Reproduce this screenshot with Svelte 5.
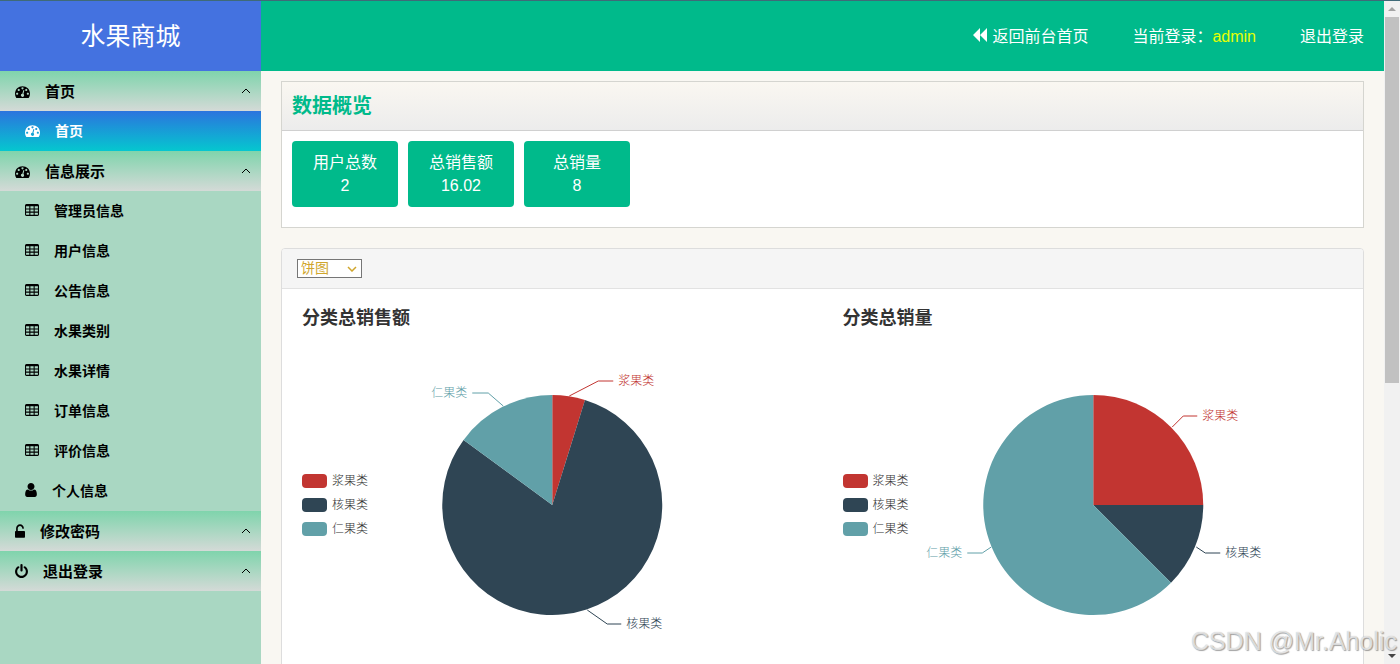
<script lang="ts">
  type IconName = 'dashboard' | 'table' | 'user' | 'unlock' | 'power';
  type MenuItem = { label: string; icon: IconName; active?: boolean };
  type MenuGroup = { label: string; icon: IconName; open: boolean; items: MenuItem[] };
  type Slice = { name: string; value: number; color: string; line: string; x: number; y: number; left?: boolean };

  const RED = '#c23531';
  const NAVY = '#2f4554';
  const TEAL = '#61a0a8';

  const cells = [192, 704, 1216]
    .flatMap((x) => [384, 768, 1152].map((y) => `M${x} ${y}h384v256h-384z`))
    .join('');

  const icons: Record<IconName, { width: number; box: string; d: string }> = {
    dashboard: {
      width: 15,
      box: '0 128 1792 1408',
      d: 'M384 1152q0-53-37.5-90.5t-90.5-37.5-90.5 37.5-37.5 90.5 37.5 90.5 90.5 37.5 90.5-37.5 37.5-90.5zm192-448q0-53-37.5-90.5t-90.5-37.5-90.5 37.5-37.5 90.5 37.5 90.5 90.5 37.5 90.5-37.5 37.5-90.5zm428 481l101-382q6-26-7.5-48.5t-38.5-29.5-48 6.5-30 39.5l-101 382q-60 5-107 43.5t-63 98.5q-20 77 20 146t117 89 146-20 89-117q16-60-6-117t-72-91zm660-33q0-53-37.5-90.5t-90.5-37.5-90.5 37.5-37.5 90.5 37.5 90.5 90.5 37.5 90.5-37.5 37.5-90.5zm-640-640q0-53-37.5-90.5t-90.5-37.5-90.5 37.5-37.5 90.5 37.5 90.5 90.5 37.5 90.5-37.5 37.5-90.5zm448 192q0-53-37.5-90.5t-90.5-37.5-90.5 37.5-37.5 90.5 37.5 90.5 90.5 37.5 90.5-37.5 37.5-90.5zm320 448q0 261-141 483-19 29-54 29h-1402q-35 0-54-29-141-221-141-483 0-182 71-348t191-286 286-191 348-71 348 71 286 191 191 286 71 348z',
    },
    table: {
      width: 14,
      box: '64 128 1664 1408',
      d: `M1728 288v1088q0 66-47 113t-113 47H224q-66 0-113-47t-47-113V288q0-66 47-113t113-47h1344q66 0 113 47t47 113z${cells}`,
    },
    user: {
      width: 12,
      box: '256 128 1280 1536',
      d: 'M1536 1399q0 109-62.5 187t-150.5 78H469q-88 0-150.5-78T256 1399q0-85 8.5-160.5t31.5-152 58.5-131 94-89T583 832q131 128 313 128t313-128q76 0 134.5 34.5t94 89 58.5 131 31.5 152 8.5 160.5zm-256-887q0 159-112.5 271.5T896 896 624.5 783.5 512 512t112.5-271.5T896 128t271.5 112.5T1280 512z',
    },
    unlock: {
      width: 10,
      box: '320 128 1152 1536',
      d: 'M1376 896q40 0 68 28t28 68v576q0 40-28 68t-68 28H416q-40 0-68-28t-28-68V992q0-40 28-68t68-28h32V576q0-185 131.5-316.5T896 128t316.5 131.5T1344 576q0 26-19 45t-45 19h-64q-26 0-45-19t-19-45q0-106-75-181t-181-75-181 75-75 181v320h736z',
    },
    power: {
      width: 13,
      box: '128 0 1536 1664',
      d: 'M1664 896q0 156-61 298t-164 245-245 164-298 61-298-61-245-164-164-245-61-298q0-182 80.5-343T435 283q43-32 95.5-25t83.5 50q32 42 24.5 94.5T589 486q-98 74-151.5 181T384 896q0 104 40.5 198.5T534 1258t163.5 109.5T896 1408t198.5-40.5T1258 1258t109.5-163.5T1408 896q0-122-53.5-229T1203 486q-42-31-49.5-83.5T1178 308q31-43 84-50t95 25q146 109 226.5 270t80.5 343zm-640-768v640q0 52-38 90t-90 38-90-38-38-90V128q0-52 38-90t90-38 90 38 38 90z',
    },
  };

  let groups: MenuGroup[] = [
    { label: '首页', icon: 'dashboard', open: true, items: [{ label: '首页', icon: 'dashboard', active: true }] },
    {
      label: '信息展示',
      icon: 'dashboard',
      open: true,
      items: [
        { label: '管理员信息', icon: 'table' },
        { label: '用户信息', icon: 'table' },
        { label: '公告信息', icon: 'table' },
        { label: '水果类别', icon: 'table' },
        { label: '水果详情', icon: 'table' },
        { label: '订单信息', icon: 'table' },
        { label: '评价信息', icon: 'table' },
        { label: '个人信息', icon: 'user' },
      ],
    },
    { label: '修改密码', icon: 'unlock', open: true, items: [] },
    { label: '退出登录', icon: 'power', open: true, items: [] },
  ];

  const stats = [
    { label: '用户总数', value: '2' },
    { label: '总销售额', value: '16.02' },
    { label: '总销量', value: '8' },
  ];

  const charts: { title: string; slices: Slice[] }[] = [
    {
      title: '分类总销售额',
      slices: [
        { name: '浆果类', value: 0.77, color: RED, line: '267,55 296,40 311,40', x: 316, y: 40 },
        { name: '核果类', value: 12.86, color: NAVY, line: '285,269 305,283 319,283', x: 324, y: 283 },
        { name: '仁果类', value: 2.39, color: TEAL, line: '201,65 186,52 170,52', x: 165, y: 52, left: true },
      ],
    },
    {
      title: '分类总销量',
      slices: [
        { name: '浆果类', value: 2, color: RED, line: '329,86 340,75 354,75', x: 359, y: 75 },
        { name: '核果类', value: 1, color: NAVY, line: '353,206 362,212 377,212', x: 382, y: 212 },
        { name: '仁果类', value: 5, color: TEAL, line: '148,206 139,212 124,212', x: 119, y: 212, left: true },
      ],
    },
  ];

  let chartType = 'pie';

  const CX = 250;
  const CY = 164;
  const R = 110;

  function point(turn: number) {
    const a = turn * Math.PI * 2;
    return `${(CX + R * Math.sin(a)).toFixed(2)} ${(CY - R * Math.cos(a)).toFixed(2)}`;
  }

  function slicePath(slices: Slice[], index: number) {
    const total = slices.reduce((sum, s) => sum + s.value, 0);
    const start = slices.slice(0, index).reduce((sum, s) => sum + s.value, 0) / total;
    const share = slices[index].value / total;
    return `M${CX} ${CY}L${point(start)}A${R} ${R} 0 ${share > 0.5 ? 1 : 0} 1 ${point(start + share)}Z`;
  }

  function toggle(index: number) {
    groups[index].open = !groups[index].open;
  }
</script>

{#snippet icon(name: IconName)}
  <svg class="icon" width={icons[name].width} height="14" viewBox={icons[name].box} aria-hidden="true">
    <path fill="currentColor" fill-rule="evenodd" d={icons[name].d} />
  </svg>
{/snippet}

<div class="window">
  <aside class="sidebar">
    <div class="logo">水果商城</div>
    <nav>
      {#each groups as group, i}
        <button class="group" type="button" aria-expanded={group.open} on:click={() => toggle(i)}>
          {@render icon(group.icon)}
          <span>{group.label}</span>
          <svg class="chevron" class:closed={!group.open} width="10" height="6" viewBox="0 0 10 6" aria-hidden="true">
            <path d="M1 5l4-4 4 4" fill="none" stroke="currentColor" />
          </svg>
        </button>
        {#if group.open}
          {#each group.items as item}
            <a class="item" class:active={item.active} href="#{item.label}">
              {@render icon(item.icon)}
              <span>{item.label}</span>
            </a>
          {/each}
        {/if}
      {/each}
    </nav>
  </aside>

  <div class="page">
    <header class="topbar">
      <a href="#front">
        <svg width="15" height="14" viewBox="0 0 15 14" aria-hidden="true">
          <path d="M7 0v14L0 7zM14 0v14L7 7z" fill="currentColor" />
        </svg>
        返回前台首页
      </a>
      <span>当前登录：<b>admin</b></span>
      <a href="#logout">退出登录</a>
    </header>

    <main>
      <section class="overview">
        <h1>数据概览</h1>
        <div class="stats">
          {#each stats as stat}
            <div class="stat">
              <div>{stat.label}</div>
              <div>{stat.value}</div>
            </div>
          {/each}
        </div>
      </section>

      <section class="panel">
        <div class="panel-heading">
          <div class="select">
            <select bind:value={chartType} aria-label="图表类型">
              <option value="pie">饼图</option>
              <option value="bar">柱状图</option>
            </select>
            <svg width="10" height="6" viewBox="0 0 10 6" aria-hidden="true">
              <path d="M1 1l4 4 4-4" fill="none" stroke="currentColor" stroke-width="1.5" />
            </svg>
          </div>
        </div>
        <div class="charts">
          {#each charts as chart}
            <div class="chart">
              <h2>{chart.title}</h2>
              <div class="canvas">
                <svg class="pie" viewBox="0 0 500 328" role="img" aria-label={chart.title}>
                  {#each chart.slices as slice, i}
                    <path d={slicePath(chart.slices, i)} fill={slice.color} />
                    <polyline points={slice.line} fill="none" stroke={slice.color} />
                    <text
                      x={slice.x}
                      y={slice.y}
                      fill={slice.color}
                      text-anchor={slice.left ? 'end' : 'start'}
                      dominant-baseline="central">{slice.name}</text
                    >
                  {/each}
                </svg>
                <ul class="legend">
                  {#each chart.slices as slice}
                    <li><i style="background: {slice.color}"></i>{slice.name}</li>
                  {/each}
                </ul>
              </div>
            </div>
          {/each}
        </div>
      </section>
    </main>
  </div>

  <div class="scrollbar" aria-hidden="true">
    <svg width="8" height="4" viewBox="0 0 8 4"><path d="M0 4l4-4 4 4z" fill="#a3a3a3" /></svg>
    <div class="track"><div class="thumb"></div></div>
    <svg width="8" height="4" viewBox="0 0 8 4"><path d="M0 0l4 4 4-4z" fill="#444" /></svg>
  </div>

  <div class="watermark">CSDN @Mr.Aholic</div>
</div>

<style>
  :global(body) {
    margin: 0;
  }

  .window {
    position: relative;
    display: flex;
    height: 100vh;
    box-sizing: border-box;
    border-top: 1px solid #3f6a78;
    overflow: hidden;
    background: #f9f7f2;
    color: #333;
    font-family: 'Liberation Sans', 'Noto Sans CJK SC', sans-serif;
    font-size: 16px;
  }

  a {
    color: inherit;
    text-decoration: none;
  }

  .sidebar {
    width: 261px;
    flex-shrink: 0;
    overflow: hidden;
    background: #a9d7c2;
    color: #000;
  }

  .logo {
    height: 70px;
    line-height: 70px;
    background: #4472e0;
    color: #fff;
    font-size: 25px;
    text-align: center;
  }

  .group,
  .item {
    display: flex;
    align-items: center;
    gap: 15px;
    width: 100%;
    height: 40px;
    box-sizing: border-box;
    font-weight: bold;
  }

  .group {
    padding: 0 10px 1px 15px;
    border: none;
    background: linear-gradient(#7fd4ac, #d4dad7);
    color: inherit;
    font-family: inherit;
    font-size: 15px;
    cursor: pointer;
  }

  .item {
    padding: 0 25px 2px;
    font-size: 14px;
  }

  .item.active {
    background: linear-gradient(#2b74de, #05c7cf);
    color: #fff;
  }

  .icon {
    flex-shrink: 0;
  }

  .chevron {
    margin-left: auto;
  }

  .chevron.closed {
    transform: rotate(180deg);
  }

  .page {
    flex: 1;
    min-width: 0;
    overflow-y: auto;
    scrollbar-width: none;
  }

  .topbar {
    display: flex;
    align-items: center;
    justify-content: flex-end;
    gap: 44px;
    height: 70px;
    box-sizing: border-box;
    padding: 0 20px 3px;
    background: #00ba8b;
    color: #fff;
  }

  .topbar a {
    display: flex;
    align-items: center;
    gap: 4px;
  }

  .topbar b {
    color: #e6ff00;
    font-weight: normal;
  }

  main {
    padding: 10px 20px;
  }

  .overview {
    margin-bottom: 20px;
    border: 1px solid #d5d5d0;
    background: #fff;
  }

  h1 {
    margin: 0;
    padding: 0 10px;
    border-bottom: 1px solid #d0d0d0;
    background: linear-gradient(#faf7f1, #ececec);
    color: #00ba8b;
    font-size: 20px;
    line-height: 48px;
  }

  .stats {
    display: flex;
    flex-wrap: wrap;
    gap: 10px;
    padding: 10px 10px 20px;
  }

  .stat {
    width: 106px;
    box-sizing: border-box;
    padding: 10px 0;
    border-radius: 4px;
    background: #00ba8b;
    color: #fff;
    line-height: 23px;
    text-align: center;
  }

  .panel {
    border: 1px solid #ddd;
    border-radius: 4px;
    background: #fff;
    overflow: hidden;
  }

  .panel-heading {
    display: flex;
    align-items: center;
    height: 40px;
    box-sizing: border-box;
    padding: 0 15px;
    border-bottom: 1px solid #e2e2e2;
    background: #f5f5f5;
  }

  .select {
    position: relative;
    display: flex;
    color: #d0a62e;
  }

  .select select {
    width: 65px;
    height: 19px;
    padding: 0 3px;
    border: 1px solid #767676;
    border-radius: 0;
    appearance: none;
    background: #fff;
    color: inherit;
    font-family: inherit;
    font-size: 14px;
    line-height: 17px;
  }

  .select svg {
    position: absolute;
    top: 7px;
    right: 5px;
    pointer-events: none;
  }

  .charts {
    display: grid;
    grid-template-columns: 1fr 1fr;
  }

  .chart {
    padding: 17px 20px;
  }

  h2 {
    margin: 0 0 11px;
    font-size: 18px;
    line-height: 24px;
  }

  /* the legend shares the pie's grid cell and sits at its left edge */
  .canvas {
    display: grid;
    align-items: center;
    font-size: 12px;
    font-weight: 300;
  }

  .pie,
  .legend {
    grid-area: 1 / 1;
  }

  .pie {
    width: 100%;
    height: 328px;
  }

  .legend {
    justify-self: start;
    margin: 0;
    padding: 0;
    list-style: none;
    line-height: 24px;
  }

  .legend li {
    display: flex;
    align-items: center;
    gap: 5px;
  }

  .legend i {
    width: 25px;
    height: 14px;
    border-radius: 4px;
  }

  .scrollbar {
    display: flex;
    flex-direction: column;
    align-items: center;
    gap: 6px;
    width: 16px;
    box-sizing: border-box;
    padding: 6px 0;
    background: #f1f1f1;
  }

  .scrollbar svg {
    flex-shrink: 0;
  }

  .track {
    flex: 1;
    width: 14px;
  }

  .thumb {
    height: 58%;
    background: #c1c1c1;
  }

  .watermark {
    position: absolute;
    right: 3px;
    bottom: 8px;
    color: rgba(240, 240, 240, 0.8);
    font-size: 25px;
    line-height: 30px;
    text-shadow: 1px 1px 1px rgba(0, 0, 0, 0.35), 0 0 1px rgba(0, 0, 0, 0.25);
    pointer-events: none;
  }
</style>
